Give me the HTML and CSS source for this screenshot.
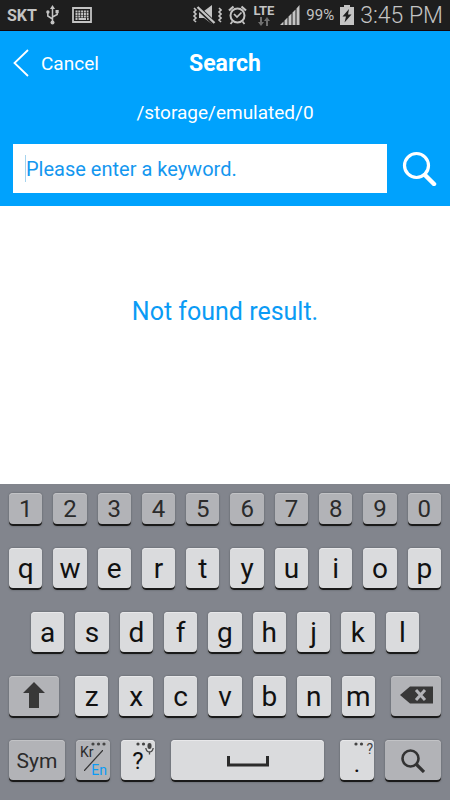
FILE: index.html
```html
<!DOCTYPE html>
<html lang="en">

<head>
    <meta charset="UTF-8">
    <meta name="viewport" content="width=device-width, initial-scale=1">
    <title>Search</title>
    <link rel="stylesheet" href="styles.css">
</head>

<body>

    <div class="status">
        <div class="status-left">
            <span class="carrier">SKT</span>
            <svg class="usb" width="13" height="20" viewBox="0 0 13 20" fill="none" stroke="#c4c4c4" stroke-width="1.5">
                <path d="M6.500 3V17M6.500 14L1.800 11V8M6.500 12L11.200 9.500V7" />
                <path d="M6.500 0L9 4H4Z" fill="#c4c4c4" stroke="none" />
                <circle cx="6.500" cy="17.500" r="2" fill="#c4c4c4" stroke="none" />
                <circle cx="1.900" cy="7" r="1.700" fill="#c4c4c4" stroke="none" />
                <path d="M9.500 5h3.200v3.200H9.500z" fill="#c4c4c4" stroke="none" />
            </svg>
            <svg class="kbd" width="20" height="16" viewBox="0 0 20 16" fill="none" stroke="#c4c4c4">
                <path d="M1 1h18v14H1z" stroke-width="1.800" />
                <path d="M3.500 4.500h13M3.500 7h13M3.500 9.500h13" stroke-width="1.800" stroke-dasharray="2 .8" />
                <path d="M3.500 12h2M6.500 12h7.500M15 12h1.700" stroke-width="1.800" />
            </svg>
        </div>
        <div class="status-right">
            <svg width="30" height="20" viewBox="0 0 30 20" fill="none" stroke="#c4c4c4">
                <path d="M7 6h5l8-6v19l-8-6H7z" fill="#c4c4c4" stroke="none" />
                <path d="M4 1L24 20" stroke="#1e1e1e" stroke-width="4.500" />
                <path d="M5.500 2L22.500 18" stroke-width="2.400" />
                <path d="M2 3l2 2-2 2 2 2-2 2 2 2-2 2 2 2M27 3l2 2-2 2 2 2-2 2 2 2-2 2 2 2" stroke-width="1.600" />
            </svg>
            <svg width="19" height="20" viewBox="0 0 19 20" fill="none" stroke="#c4c4c4">
                <circle cx="9.500" cy="10.500" r="7" stroke-width="2" />
                <path d="M6 9l3 3 4.500-4.500" stroke-width="1.700" />
                <path d="M1 5.500L5.500 1.500M18 5.500L13.500 1.500" stroke-width="2.200" />
                <path d="M4.500 16.500L2.500 19M14.500 16.500l2 2.500" stroke-width="1.800" />
            </svg>
            <div class="lte">
                <span>LTE</span>
                <svg width="12" height="9" viewBox="0 0 12 9" fill="#707070">
                    <path d="M2 0h2v5h2L3 9 0 5h2zM8 9h2V4h2L9 0 6 4h2z" />
                </svg>
            </div>
            <svg width="20" height="20" viewBox="0 0 20 20" fill="#c4c4c4">
                <path d="M0 20L3.500 16.500V20zM4.500 15.500L7.500 12.500V20h-3zM8.500 11.500l3-3V20h-3zM12.500 7.500l3-3V20h-3zM16.500 3.500L19.500 0V20h-3z" />
            </svg>
            <span class="percent">99%</span>
            <svg width="14" height="20" viewBox="0 0 14 20">
                <path d="M4 0h6v2h4v18H0V2h4z" fill="#c4c4c4" />
                <path d="M9 4L2.500 11.500H6L4.500 17.500 11.500 9.500H8z" fill="#1e1e1e" />
            </svg>
            <span class="time">3:45 PM</span>
        </div>
    </div>

    <header class="header">
        <div class="title-bar">
            <button class="cancel" type="button">
                <svg width="16" height="28" viewBox="0 0 16 28" fill="none" stroke="#fff" stroke-width="1.800">
                    <path d="M15 1L1.500 14 15 27" />
                </svg>
                Cancel
            </button>
            <h1>Search</h1>
        </div>
        <p class="path">/storage/emulated/0</p>
        <form class="search" onsubmit="return false">
            <div class="field">
                <span class="caret"></span>
                <input type="text" placeholder="Please enter a keyword." aria-label="Keyword">
            </div>
            <button class="search-btn" type="submit" aria-label="Search">
                <svg width="35" height="35" viewBox="0 0 35 35" fill="none" stroke="#fff">
                    <circle cx="14.500" cy="14.500" r="12" stroke-width="3.200" />
                    <path d="M23 24l9 9" stroke-width="4.500" stroke-linecap="round" />
                </svg>
            </button>
        </form>
    </header>

    <main class="results">
        <p>Not found result.</p>
    </main>

    <div class="keyboard">
        <div class="row numbers">
            <button class="key">1</button>
            <button class="key">2</button>
            <button class="key">3</button>
            <button class="key">4</button>
            <button class="key">5</button>
            <button class="key">6</button>
            <button class="key">7</button>
            <button class="key">8</button>
            <button class="key">9</button>
            <button class="key">0</button>
        </div>

        <div class="row">
            <button class="key">q</button>
            <button class="key">w</button>
            <button class="key">e</button>
            <button class="key">r</button>
            <button class="key">t</button>
            <button class="key">y</button>
            <button class="key">u</button>
            <button class="key">i</button>
            <button class="key">o</button>
            <button class="key">p</button>
        </div>

        <div class="row middle">
            <button class="key">a</button>
            <button class="key">s</button>
            <button class="key">d</button>
            <button class="key">f</button>
            <button class="key">g</button>
            <button class="key">h</button>
            <button class="key">j</button>
            <button class="key">k</button>
            <button class="key">l</button>
        </div>

        <div class="row lower">
            <button class="key dark wide" aria-label="Shift">
                <svg width="22" height="26" viewBox="0 0 22 26" fill="#383838">
                    <path d="M11 0L22 11H16V26H6V11H0z" />
                </svg>
            </button>
            <div class="row letters">
                <button class="key">z</button>
                <button class="key">x</button>
                <button class="key">c</button>
                <button class="key">v</button>
                <button class="key">b</button>
                <button class="key">n</button>
                <button class="key">m</button>
            </div>
            <button class="key dark wide" aria-label="Backspace">
                <svg width="33" height="18" viewBox="0 0 33 18">
                    <path d="M0 9L10 .5H33V17.500H10z" fill="#383838" />
                    <path d="M16 4l9 10M25 4l-9 10" stroke="#b2b3b7" stroke-width="3" />
                </svg>
            </button>
        </div>

        <div class="row">
            <button class="key dark sym">Sym</button>
            <button class="key dark small">
                <span class="kr">Kr</span>
                <span class="en">En</span>
                <svg class="slash" width="19" height="21" viewBox="0 0 19 21" stroke="#333" stroke-width="1.200">
                    <path d="M0 21L19 0" />
                </svg>
                <svg class="hint" width="15" height="4" viewBox="0 0 15 4" fill="#444">
                    <circle cx="2" cy="2" r="1.600" />
                    <circle cx="7.500" cy="2" r="1.600" />
                    <circle cx="13" cy="2" r="1.600" />
                </svg>
            </button>
            <button class="key small question">?
                <svg class="hint" width="20" height="13" viewBox="0 0 20 13" fill="none" stroke="#444">
                    <circle cx="3" cy="2" r="1.600" fill="#444" stroke="none" />
                    <circle cx="8.500" cy="2" r="1.600" fill="#444" stroke="none" />
                    <path d="M14.500 3v2" stroke-width="4" stroke-linecap="round" />
                    <path d="M10.800 6q.7 4 3.700 4t3.700-4M14.500 10v2.500" stroke-width="1.300" />
                </svg>
            </button>
            <button class="key space" aria-label="Space">
                <svg width="42" height="11" viewBox="0 0 42 11" fill="none" stroke="#2b2b2b" stroke-width="3">
                    <path d="M1.500 0V9H40.500V0" />
                </svg>
            </button>
            <button class="key small dot">.
                <span class="hint">
                    <svg width="10" height="4" viewBox="0 0 10 4" fill="#444">
                        <circle cx="2" cy="2" r="1.600" />
                        <circle cx="7.500" cy="2" r="1.600" />
                    </svg>
                    ?
                </span>
            </button>
            <button class="key dark sym" aria-label="Search key">
                <svg width="24" height="24" viewBox="0 0 24 24" fill="none" stroke="#333">
                    <circle cx="9.500" cy="9.500" r="8" stroke-width="2.600" />
                    <path d="M15 15l8 8" stroke-width="3.200" />
                </svg>
            </button>
        </div>
    </div>

</body>

</html>
```
FILE: styles.css
```css
* {
    padding: 0;
    margin: 0;
    box-sizing: border-box;
}

body {
    min-height: 100vh;
    display: flex;
    flex-direction: column;
    background: #fff;
    font-family: Roboto, "Noto Sans", sans-serif;
}

svg {
    display: block;
    flex: none;
}

button {
    border: none;
    background: none;
    font-family: inherit;
    cursor: pointer;
}

/* status bar */
.status {
    display: flex;
    justify-content: space-between;
    height: 31px;
    padding: 0 7px;
    background: #1e1e1e;
    border-bottom: 1px solid #14040a;
    color: #c4c4c4;
}

.status-left,
.status-right {
    display: flex;
    align-items: center;
}

.status-right {
    gap: 6px;
}

.carrier {
    font-size: 16px;
    font-weight: 700;
}

.usb {
    margin-left: 9px;
}

.kbd {
    margin-left: 13px;
}

.lte {
    display: flex;
    flex-direction: column;
    align-items: center;
    font-size: 13px;
    line-height: 12px;
    font-weight: 700;
}

.percent {
    font-size: 15px;
}

.time {
    font-size: 23px;
    font-weight: 300;
}

/* header */
.header {
    background: #00a2fd;
    color: #fff;
    padding: 0 13px 13px;
}

.title-bar {
    display: grid;
    grid-template-columns: 1fr auto 1fr;
    align-items: center;
    height: 64px;
}

.cancel {
    display: flex;
    align-items: center;
    gap: 12px;
    color: #fff;
    font-size: 19px;
}

h1 {
    font-size: 23px;
    font-weight: 700;
}

.path {
    height: 49px;
    line-height: 36px;
    text-align: center;
    font-size: 19px;
}

.search {
    display: flex;
    align-items: center;
    gap: 15px;
}

.field {
    flex: 1;
    display: flex;
    align-items: center;
    height: 49px;
    padding: 0 12px;
    background: #fff;
}

.caret {
    width: 1px;
    height: 27px;
    background: #a6d4ee;
}

.field input {
    flex: 1;
    min-width: 0;
    border: none;
    outline: none;
    background: none;
    font-family: inherit;
    font-size: 20px;
    color: #1497ef;
}

.field input::placeholder {
    color: #1497ef;
}

/* results */
.results {
    flex: 1;
    padding: 90px 16px 16px;
    text-align: center;
    color: #0a9bf5;
    font-size: 25px;
    line-height: 32px;
}

/* keyboard */
.keyboard {
    display: flex;
    flex-direction: column;
    gap: 22px;
    padding: 9px 9px 18px;
    background: #82858d;
}

.row {
    display: flex;
    gap: 11px;
}

.middle {
    padding: 0 22px;
}

.lower {
    gap: 16px;
}

.letters {
    flex: 1;
}

.key {
    position: relative;
    flex: 1 1 0;
    min-width: 0;
    height: 42px;
    display: flex;
    align-items: center;
    justify-content: center;
    border-radius: 4px;
    background: #dadbdd;
    box-shadow: inset 0 -2px #1a1a1a, inset 0 1px #e8e8ea, 0 0 2px #55575c;
    color: #111;
    font-size: 28px;
    line-height: 40px;
}

.numbers .key {
    height: 33px;
    font-size: 24px;
    line-height: 31px;
}

.numbers .key,
.dark {
    background: #b2b3b7;
    box-shadow: inset 0 -2px #1a1a1a, inset 0 1px #c2c3c6, 0 0 2px #55575c;
    color: #2b2b2b;
}

.wide {
    flex: 0 0 50px;
    padding-bottom: 4px;
}

.sym {
    flex: 0 0 56px;
    font-size: 21px;
}

.small {
    flex: 0 0 34px;
}

.space {
    margin: 0 5px;
}

.question {
    font-size: 24px;
}

.dot {
    align-items: flex-end;
    padding-bottom: 8px;
    font-size: 24px;
    line-height: 20px;
}

/* small marks laid over the key faces */
.hint {
    position: absolute;
    top: 2px;
    right: 4px;
}

.question .hint {
    right: 0;
}

.dot .hint {
    display: flex;
    gap: 2px;
    right: 1px;
    font-size: 14px;
    line-height: 14px;
    color: #444;
}

.kr,
.en {
    position: absolute;
    font-size: 14px;
    line-height: 14px;
}

.kr {
    left: 4px;
    top: 5px;
}

.en {
    right: 3px;
    bottom: 5px;
    color: #0a9bf5;
}

.slash {
    position: absolute;
    left: 8px;
    top: 10px;
}
```
